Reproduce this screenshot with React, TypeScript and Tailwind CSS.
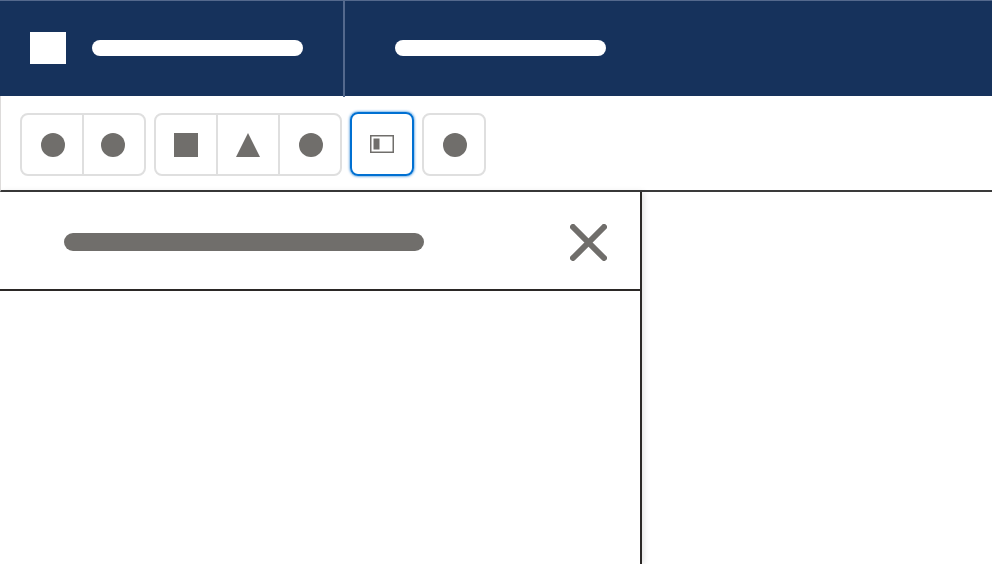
const Dot = () => <div className="w-6 h-6 rounded-full bg-[#706e6b]" />;

const Square = () => <div className="w-6 h-6 bg-[#706e6b]" />;

const Triangle = () => (
  <svg width="24" height="24" viewBox="0 0 24 24">
    <polygon points="12,0 24,24 0,24" fill="#706e6b" />
  </svg>
);

const PanelIcon = () => (
  <svg width="24" height="18" viewBox="0 0 24 18" fill="none">
    <rect x="0.75" y="0.75" width="22.5" height="16.5" stroke="#706e6b" strokeWidth="1.5" />
    <rect x="3.5" y="3.5" width="6" height="11" fill="#706e6b" />
  </svg>
);

const App = () => {
  return (
    <div className="w-[992px] h-[564px] flex flex-col overflow-hidden bg-white">
      <header className="h-24 flex shrink-0 bg-[#16325c] border-t border-[#54698d]">
        <div className="w-[345px] h-24 flex items-center gap-[26px] pl-[30px] pb-[2px] border-r-2 border-[#54698d]">
          <div className="w-9 h-8 bg-white" />
          <div className="w-[211px] h-4 rounded-full bg-white" />
        </div>
        <div className="flex items-center pl-[50px] pb-[1px]">
          <div className="w-[211px] h-4 rounded-full bg-white" />
        </div>
      </header>

      <div className="h-[96px] shrink-0 flex items-start gap-2 pl-[19px] pt-[17px] border-l border-[#dddbda] border-b-2 border-b-[#3a3a3a]">
        <div className="w-[126px] h-[63px] flex rounded-lg border-2 border-[#dfdfdf]">
          <div className="w-[60px] h-full flex items-center justify-center pl-[2px]">
            <Dot />
          </div>
          <div className="w-[62px] h-full flex items-center justify-center pr-[2px] border-l-2 border-[#dfdfdf]">
            <Dot />
          </div>
        </div>
        <div className="w-[188px] h-[63px] flex rounded-lg border-2 border-[#dfdfdf]">
          <div className="w-[60px] h-full flex items-center justify-center">
            <Square />
          </div>
          <div className="w-[62px] h-full flex items-center justify-center border-l-2 border-[#dfdfdf]">
            <Triangle />
          </div>
          <div className="w-[62px] h-full flex items-center justify-center pl-[2px] border-l-2 border-[#dfdfdf]">
            <Dot />
          </div>
        </div>
        <div className="w-16 h-16 -mt-px flex items-center justify-center rounded-lg border-2 border-[#0070d2] shadow-[0_0_3px_#0070d2]">
          <PanelIcon />
        </div>
        <div className="w-16 h-[63px] flex items-center justify-center pl-[2px] rounded-lg border-2 border-[#dfdfdf]">
          <Dot />
        </div>
      </div>

      <div className="flex-1 flex min-h-0">
        <aside className="w-[642px] flex flex-col border-r-2 border-[#2b2826] shadow-[2px_0_6px_rgba(0,0,0,0.12)]">
          <div className="h-[99px] shrink-0 flex items-center justify-between pl-16 pr-[33px] pt-[3px] border-b-2 border-[#2b2826]">
            <div className="w-[360px] h-[18px] rounded-full bg-[#706e6b]" />
            <svg width="37" height="37" viewBox="0 0 37 37" fill="none">
              <path d="M3 3 L34 34 M34 3 L3 34" stroke="#706e6b" strokeWidth="6" strokeLinecap="round" />
            </svg>
          </div>
        </aside>
      </div>
    </div>
  );
};

export default App;
